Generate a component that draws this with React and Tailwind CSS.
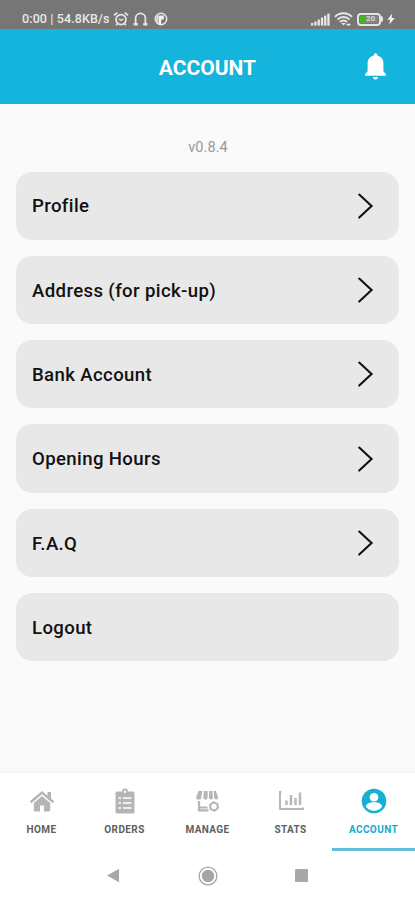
import React from 'react';

const ROWS = [
  { label: 'Profile', arrow: true },
  { label: 'Address (for pick-up)', arrow: true },
  { label: 'Bank Account', arrow: true },
  { label: 'Opening Hours', arrow: true },
  { label: 'F.A.Q', arrow: true },
  { label: 'Logout', arrow: false },
];

const AlarmIcon = () => (
  <svg width="16" height="16" viewBox="0 0 16 16" fill="none" stroke="#e6e6e6" strokeWidth="1.7">
    <circle cx="8" cy="8.6" r="5" />
    <path d="M1 4.2 4.4 1.6M15 4.2 11.6 1.6M4.4 12.6 3.2 14.4M11.6 12.6l1.2 1.8" />
    <path d="M5.8 8l2.2 1.4L10.4 8" strokeWidth="1.3" />
  </svg>
);

const HeadphonesIcon = () => (
  <svg width="15" height="16" viewBox="0 0 15 16" fill="none" stroke="#e6e6e6" strokeWidth="1.7">
    <path d="M2.6 13V7.2a4.9 4.9 0 0 1 9.8 0V13" />
    <path d="M.6 13.3h4.2M10.2 13.3h4.2" strokeWidth="2.4" />
  </svg>
);

const AppBadgeIcon = () => (
  <svg width="14" height="14" viewBox="0 0 14 14">
    <circle cx="7" cy="7" r="5.7" fill="#777" stroke="#e8e8e8" strokeWidth="1.5" />
    <path d="M4.6 3.4h5.2v4.2H7.2v4.600H5z" fill="#f2f2f2" />
    <path d="M2.200 4.500v5l2.400 2.400V3z" fill="#d8d8d8" />
  </svg>
);

const SignalIcon = () => (
  <svg width="19" height="13" viewBox="0 0 19 13" fill="#e8e8e8">
    <rect x="0" y="10" width="2.3" height="2.6" />
    <rect x="3.3" y="8.6" width="2.3" height="4" />
    <rect x="6.6" y="6.6" width="2.3" height="6" />
    <rect x="9.9" y="4.6" width="2.3" height="8" />
    <rect x="13.1" y="2.6" width="2.3" height="10" />
    <rect x="16.3" y="0.6" width="2.3" height="12" />
  </svg>
);

const WifiIcon = () => (
  <svg width="19" height="14" viewBox="0 0 19 14" fill="none" stroke="#e8e8e8" strokeWidth="1.9">
    <path d="M1 4.8C5.6.1 13.4.1 18 4.8" />
    <path d="M3.5 7.6c3.3-3.5 8.7-3.5 12 0" />
    <path d="M6 10.2c2-2.2 5-2.2 7 0" />
    <path d="M7.3 11h4.4l-2.2 2.6z" fill="#e8e8e8" stroke="none" />
    <path d="M12.6 12.6h3.8" strokeWidth="1.8" />
  </svg>
);

const Battery = () => (
  <div className="flex items-center">
    <div className="flex h-[13px] w-[24px] items-center rounded-[4px] border-2 border-[#e4e4e4] p-px">
      <div className="flex h-full w-full items-center rounded-[2px] bg-[#858585]">
        <div className="h-full w-[6px] rounded-l-[2px] bg-[#45b51c]" />
        <span className="text-[8px] leading-none font-bold text-[#d4d4d4]">20</span>
      </div>
    </div>
    <div className="h-[6px] w-[2px] rounded-r-[2px] bg-[#e8e8e8]" />
  </div>
);

const StatusBar = () => (
  <div className="flex h-[29px] items-center bg-[#767676] pt-[9px] pr-[20px] pl-[22px]">
    <span className="w-[88px] text-[12.5px] leading-none font-medium tracking-[0.12px] whitespace-nowrap text-[#e8e8e8]">
      0:00 | 54.8KB/s
    </span>
    <div className="ml-[3px] flex items-center gap-[4px]">
      <AlarmIcon />
      <HeadphonesIcon />
      <div className="ml-[2px]"><AppBadgeIcon /></div>
    </div>
    <div className="ml-auto flex items-center gap-[4px]">
      <SignalIcon />
      <WifiIcon />
      <Battery />
      <svg width="8" height="12" viewBox="0 0 8 12" fill="#f0f0f0">
        <path d="M5.2.5.4 6.8h2.8L2.2 11.5 7.8 5H4.6z" />
      </svg>
    </div>
  </div>
);

const Header = () => (
  <header className="grid h-[75px] grid-cols-[1fr_auto_1fr] items-center bg-[#15b4dc]">
    <div />
    <h1 className="pt-[4px] text-[21px] leading-none font-bold text-white">ACCOUNT</h1>
    <svg className="mr-[29px] justify-self-end" width="21" height="27" viewBox="0 0 21 27" fill="#fff">
      <path d="M10.5.3c1 0 1.7.8 1.7 1.8v.5c3.8.8 6.200 3.800 6.200 7.400v8.200l2.400 2.900v1.600H.2v-1.600l2.400-2.900V10c0-3.600 2.400-6.600 6.200-7.400v-.5c0-1 .7-1.800 1.700-1.800zM8 24h5c0 1.500-1.100 2.600-2.500 2.600S8 25.500 8 24z" />
    </svg>
  </header>
);

const MenuRow = ({ label, arrow }) => (
  <button className="flex h-[68.3px] w-full items-center justify-between rounded-[16px] bg-[#e8e8e8] pr-[25px] pl-[16px] text-left">
    <span className="pt-[2px] text-[18.6px] leading-none font-medium tracking-[0.37px] text-[#111]">{label}</span>
    {arrow && (
      <svg width="17" height="26" viewBox="0 0 17 26" fill="none" stroke="#111" strokeWidth="2.1" strokeLinecap="round">
        <path d="M2.2 1.6 14.6 13.1 2.2 24.6" />
      </svg>
    )}
  </button>
);

const HomeIcon = () => (
  <svg width="26" height="22" viewBox="0 0 26 22" fill="#b5b5b5">
    <path d="M13 6 4.8 13v7.300c0 .7.5 1.200 1.200 1.200h5V15.500h4v6h5c.7 0 1.200-.5 1.200-1.200V13z" />
    <path d="m1.600 12.200 11.400-9.600 11.400 9.600" fill="none" stroke="#b5b5b5" strokeWidth="2.500" />
    <path d="M18.500 2H22v7.500l-3.500-3z" />
  </svg>
);

const OrdersIcon = () => (
  <svg width="20" height="26" viewBox="0 0 20 26">
    <path d="M2 3.500h5a3 3 0 0 1 6 0h5a1.500 1.500 0 0 1 1.500 1.500v19a1.500 1.500 0 0 1-1.500 1.500H2A1.500 1.500 0 0 1 .5 24V5A1.500 1.500 0 0 1 2 3.500z" fill="#b5b5b5" />
    <circle cx="10" cy="3.700" r="1.200" fill="#fff" />
    <path d="M3.500 10h2.600M3.500 15h2.600M3.500 20h2.600M8 10h8.500M8 15h8.500M8 20h8.500" stroke="#fff" strokeWidth="1.600" />
  </svg>
);

const ManageIcon = () => (
  <svg width="26" height="22" viewBox="0 0 26 22">
    <g fill="#b5b5b5">
      <path d="M3.500 1h3.900L6.400 7a2.400 2.400 0 0 1-5.200 0z" />
      <path d="M9 1h3.600V7.500a2.100 2.100 0 0 1-4.300 0z" />
      <path d="M14.100 1h3.200l.6 6.500a2 2 0 0 1-4 0z" />
      <path d="M18.600 1h2.300L23.200 7.500a2 2 0 0 1-3.900.6z" />
    </g>
    <path d="M4 11v9.300h9.500" fill="none" stroke="#b5b5b5" strokeWidth="2.200" />
    <path d="M5 17.500h7.500" stroke="#b5b5b5" strokeWidth="2" />
    <circle cx="19" cy="16.500" r="3.700" fill="none" stroke="#b5b5b5" strokeWidth="2" />
    <circle cx="19" cy="16.500" r="4.700" fill="none" stroke="#b5b5b5" strokeWidth="1" strokeDasharray="2.460 2.460" />
  </svg>
);

const StatsIcon = () => (
  <svg width="26" height="20" viewBox="0 0 26 20" fill="none" stroke="#b8b8b8">
    <path d="M3.500 1H2v17h23v-1.500" strokeWidth="2" />
    <path d="M8.500 9.500V14M13 4v10M17.500 7v7M22 1.500V14" strokeWidth="2.500" />
  </svg>
);

const AccountIcon = () => (
  <svg width="26" height="26" viewBox="0 0 26 26">
    <circle cx="13" cy="13" r="12.300" fill="#17afd3" />
    <circle cx="13" cy="9.300" r="4.300" fill="#fff" />
    <path d="M4.900 18.800c0-3.200 4.200-4.500 8.100-4.500s8.100 1.300 8.100 4.500a10 10 0 0 1-16.200 0z" fill="#fff" />
  </svg>
);

const TABS = [
  { label: 'HOME', Icon: HomeIcon },
  { label: 'ORDERS', Icon: OrdersIcon },
  { label: 'MANAGE', Icon: ManageIcon },
  { label: 'STATS', Icon: StatsIcon },
  { label: 'ACCOUNT', Icon: AccountIcon, active: true },
];

const TabBar = () => (
  <nav className="grid h-[78px] grid-cols-5">
    {TABS.map(({ label, Icon, active }) => (
      <button
        key={label}
        className={`flex flex-col items-center border-b-[3px] pt-[14px] ${
          active ? 'border-[#62bdd8] text-[#17a9cc]' : 'border-transparent text-[#606060]'
        }`}
      >
        <span className="flex h-[28px] items-center justify-center">
          <Icon />
        </span>
        <span className="mt-[9px] text-[10px] leading-[12px] font-bold tracking-[0.4px]">{label}</span>
      </button>
    ))}
  </nav>
);

const SystemNav = () => (
  <div className="flex h-[49px] items-center justify-center gap-[77px] pr-px">
    <svg width="15" height="15" viewBox="0 0 15 15" fill="#a8a8a8">
      <path d="M1 7.500 13 .800v13.400z" />
    </svg>
    <svg width="20" height="20" viewBox="0 0 20 20">
      <circle cx="10" cy="10" r="8.900" fill="none" stroke="#a5a5a5" strokeWidth="1.300" />
      <circle cx="10" cy="10" r="6.200" fill="#a5a5a5" />
    </svg>
    <svg width="13" height="13" viewBox="0 0 13 13" fill="#a8a8a8">
      <rect width="13" height="13" rx="0.800" />
    </svg>
  </div>
);

export default function App() {
  return (
    <div className="flex h-[900px] w-[415px] flex-col overflow-hidden bg-[#fafafa] font-[Roboto,sans-serif]">
      <StatusBar />
      <Header />
      <main className="flex flex-1 flex-col px-4">
        <p className="pt-[34.5px] pb-4 pl-px text-center text-[14.5px] leading-[17px] tracking-[0.1px] text-[#999]">v0.8.4</p>
        <div className="flex flex-col gap-[16px]">
          {ROWS.map((row) => (
            <MenuRow key={row.label} {...row} />
          ))}
        </div>
      </main>
      <footer className="bg-white shadow-[0_-1px_3px_rgba(0,0,0,0.04)]">
        <TabBar />
        <SystemNav />
      </footer>
    </div>
  );
}
